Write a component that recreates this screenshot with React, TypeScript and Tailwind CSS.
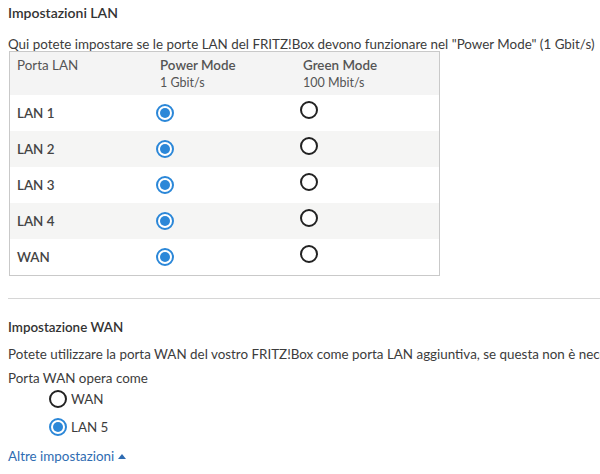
import React from "react";

function Radio({ checked }: { checked: boolean }) {
  return checked ? (
    <span className="inline-flex h-[18px] w-[18px] shrink-0 items-center justify-center rounded-full border-2 border-[#2b87d8] bg-white">
      <span className="h-[10px] w-[10px] rounded-full bg-[#2b87d8]" />
    </span>
  ) : (
    <span className="inline-block h-[18px] w-[18px] shrink-0 rounded-full border-2 border-[#222] bg-white" />
  );
}

const rows = ["LAN 1", "LAN 2", "LAN 3", "LAN 4", "WAN"];

export default function App() {
  return (
    <div
      className="w-[600px] h-[474px] overflow-hidden bg-white text-[13.4px] text-[#3c3c3c]"
      style={{ fontFamily: "Lato, 'Noto Sans', sans-serif" }}
    >
      <div className="pl-[8px] pt-[3px]">
        <div className="h-[20px] leading-[20px] text-[14px] font-semibold text-[#333]">Impostazioni LAN</div>
        <div className="mt-[13px] h-[16px] leading-[16px] whitespace-nowrap">
          Qui potete impostare se le porte LAN del FRITZ!Box devono funzionare nel "Power Mode" (1 Gbit/s)
        </div>
        <div className="ml-[1px] mt-[-1px] w-[431px] border border-[#c9c9c9]">
          <div className="flex h-[43px] bg-[#f4f4f4] pt-[4px] text-[13.4px] leading-[18px] text-[#555]">
            <div className="w-[150px] pl-[7px]">Porta LAN</div>
            <div className="w-[143px]">
              <div className="font-semibold text-[#555]">Power Mode</div>
              <div className="text-[12.5px]">1 Gbit/s</div>
            </div>
            <div>
              <div className="font-semibold text-[#555]">Green Mode</div>
              <div className="text-[12.5px]">100 Mbit/s</div>
            </div>
          </div>
          {rows.map((r, i) => (
            <div
              key={r}
              className={`flex h-[36px] items-center ${i % 2 === 1 ? "bg-[#f5f5f4]" : "bg-white"}`}
            >
              <div className="w-[146px] pl-[7px] text-[13.4px] font-semibold text-[#444]">{r}</div>
              <div className="w-[144px]">
                <Radio checked />
              </div>
              <div>
                <Radio checked={false} />
              </div>
            </div>
          ))}
        </div>
        <div className="mt-[22px] h-px bg-[#d6d6d6]" />
        <div className="mt-[18px] h-[20px] leading-[20px] font-semibold text-[#333] text-[13.4px]">Impostazione WAN</div>
        <div className="mt-[6px] h-[22px] leading-[22px] whitespace-nowrap">
          Potete utilizzare la porta WAN del vostro FRITZ!Box come porta LAN aggiuntiva, se questa non è necessaria per la connessione a Internet.
        </div>
        <div className="mt-[2px] h-[22px] leading-[22px]">Porta WAN opera come</div>
        <div className="ml-[41px] flex flex-col gap-[8px]">
          <label className="flex h-[20px] items-center gap-[4px]">
            <Radio checked={false} />
            <span>WAN</span>
          </label>
          <label className="flex h-[20px] items-center gap-[4px]">
            <Radio checked />
            <span>LAN 5</span>
          </label>
        </div>
        <div className="mt-[9px] flex h-[20px] items-center gap-[3px] text-[#2f6cb2]">
          <span>Altre impostazioni</span>
          <svg width="10" height="8" viewBox="0 0 10 8">
            <path d="M1 7 L5 2 L9 7 Z" fill="#2f6cb2" />
          </svg>
        </div>
      </div>
    </div>
  );
}
